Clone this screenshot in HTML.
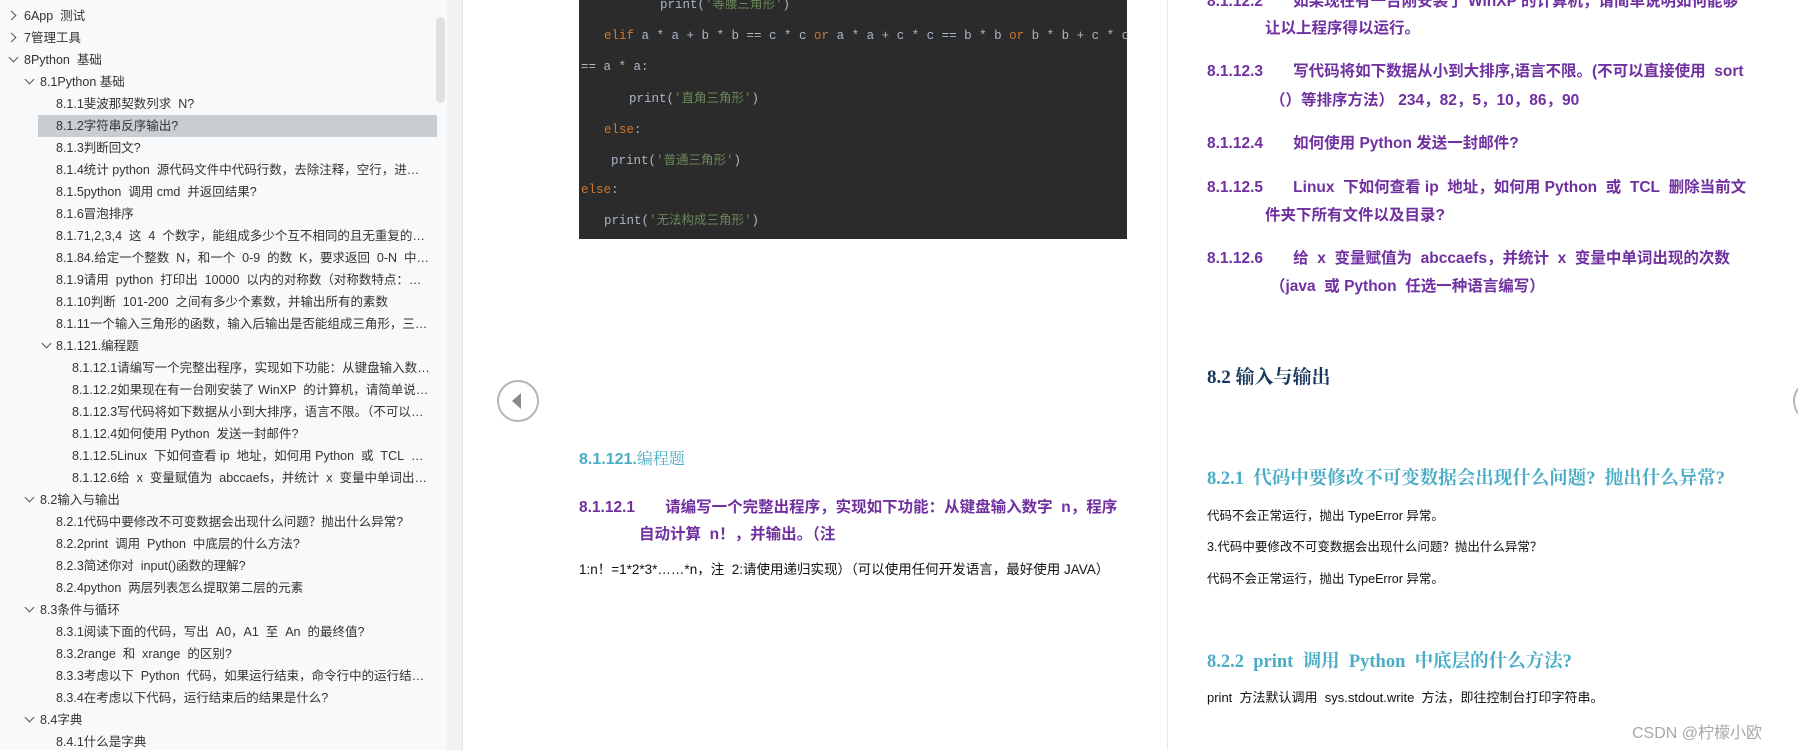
<!DOCTYPE html>
<html><head><meta charset="utf-8"><style>
*{margin:0;padding:0;box-sizing:border-box}
body{width:1798px;height:750px;overflow:hidden;background:#fff;position:relative;font-family:"Liberation Sans","Noto Sans CJK SC",sans-serif}
.a{position:absolute;white-space:nowrap}
#side{position:absolute;left:0;top:0;width:447px;height:750px;background:#f8f9fa}
#gap{position:absolute;left:447px;top:0;width:16px;height:750px;background:#f1f2f4;border-right:1px solid #e3e4e6}
.r{position:absolute;height:22px;line-height:22px;font-size:12.5px;color:#333;white-space:nowrap;overflow:hidden;text-overflow:ellipsis;max-width:calc(430px - var(--l,56px))}
.chev{position:absolute;width:7px;height:7px;border-right:1.3px solid #555;border-bottom:1.3px solid #555}
.code{position:absolute;left:579px;top:0;width:548px;height:239px;background:#2b2b2b;font-family:"Liberation Mono","Noto Sans CJK SC",monospace;font-size:12.5px;color:#a9b7c6}
.code div{position:absolute;height:16px;line-height:16px;white-space:pre}
.k{color:#cc7832}.s{color:#6a8759}
.p{color:#7030a0;font-weight:bold;font-size:15.5px;line-height:22px}
.t{color:#4bacc6;font-weight:bold;font-family:"Liberation Serif","Noto Serif CJK SC",serif;font-size:18.5px}
.b{color:#111;font-size:12.5px;line-height:18px}
</style></head><body>
<div id="side"></div><div id="gap"></div>
<div class="a" style="left:436px;top:17px;width:9px;height:86px;background:#dfe0e2;border-radius:5px"></div>
<div class="a" style="left:38px;top:115px;width:399px;height:22px;background:#c9ced3"></div>

<div class="chev" style="left:8px;top:12px;transform:rotate(-45deg)"></div><div class="r" style="left:24px;top:5px">6App&nbsp; 测试</div>
<div class="chev" style="left:8px;top:34px;transform:rotate(-45deg)"></div><div class="r" style="left:24px;top:27px">7管理工具</div>
<div class="chev" style="left:10px;top:54px;transform:rotate(45deg)"></div><div class="r" style="left:24px;top:49px">8Python&nbsp; 基础</div>
<div class="chev" style="left:26px;top:76px;transform:rotate(45deg)"></div><div class="r" style="left:40px;top:71px">8.1Python 基础</div>
<div class="r" style="left:56px;top:93px">8.1.1斐波那契数列求&nbsp; N?</div>
<div class="r" style="left:56px;top:115px">8.1.2字符串反序输出?</div>
<div class="r" style="left:56px;top:137px">8.1.3判断回文?</div>
<div class="r" style="left:56px;top:159px">8.1.4统计 python&nbsp; 源代码文件中代码行数，去除注释，空行，进行输出</div>
<div class="r" style="left:56px;top:181px">8.1.5python&nbsp; 调用 cmd&nbsp; 并返回结果?</div>
<div class="r" style="left:56px;top:203px">8.1.6冒泡排序</div>
<div class="r" style="left:56px;top:225px">8.1.71,2,3,4&nbsp; 这&nbsp; 4&nbsp; 个数字，能组成多少个互不相同的且无重复的三位数</div>
<div class="r" style="left:56px;top:247px">8.1.84.给定一个整数&nbsp; N，和一个&nbsp; 0-9&nbsp; 的数&nbsp; K，要求返回&nbsp; 0-N&nbsp; 中数字</div>
<div class="r" style="left:56px;top:269px">8.1.9请用&nbsp; python&nbsp; 打印出&nbsp; 10000&nbsp; 以内的对称数（对称数特点：数字</div>
<div class="r" style="left:56px;top:291px">8.1.10判断&nbsp; 101-200&nbsp; 之间有多少个素数，并输出所有的素数</div>
<div class="r" style="left:56px;top:313px">8.1.11一个输入三角形的函数，输入后输出是否能组成三角形，三角形类型</div>
<div class="chev" style="left:43px;top:340px;transform:rotate(45deg)"></div><div class="r" style="left:56px;top:335px">8.1.121.编程题</div>
<div class="r" style="--l:72px;left:72px;top:357px">8.1.12.1请编写一个完整出程序，实现如下功能：从键盘输入数字数字</div>
<div class="r" style="--l:72px;left:72px;top:379px">8.1.12.2如果现在有一台刚安装了 WinXP&nbsp; 的计算机，请简单说明如何</div>
<div class="r" style="--l:72px;left:72px;top:401px">8.1.12.3写代码将如下数据从小到大排序，语言不限。（不可以直接使用</div>
<div class="r" style="--l:72px;left:72px;top:423px">8.1.12.4如何使用 Python&nbsp; 发送一封邮件?</div>
<div class="r" style="--l:72px;left:72px;top:445px">8.1.12.5Linux&nbsp; 下如何查看 ip&nbsp; 地址，如何用 Python&nbsp; 或&nbsp; TCL&nbsp; 删除当前</div>
<div class="r" style="--l:72px;left:72px;top:467px">8.1.12.6给&nbsp; x&nbsp; 变量赋值为&nbsp; abccaefs，并统计&nbsp; x&nbsp; 变量中单词出现的次数</div>
<div class="chev" style="left:26px;top:494px;transform:rotate(45deg)"></div><div class="r" style="left:40px;top:489px">8.2输入与输出</div>
<div class="r" style="left:56px;top:511px">8.2.1代码中要修改不可变数据会出现什么问题？抛出什么异常?</div>
<div class="r" style="left:56px;top:533px">8.2.2print&nbsp; 调用&nbsp; Python&nbsp; 中底层的什么方法?</div>
<div class="r" style="left:56px;top:555px">8.2.3简述你对&nbsp; input()函数的理解?</div>
<div class="r" style="left:56px;top:577px">8.2.4python&nbsp; 两层列表怎么提取第二层的元素</div>
<div class="chev" style="left:26px;top:604px;transform:rotate(45deg)"></div><div class="r" style="left:40px;top:599px">8.3条件与循环</div>
<div class="r" style="left:56px;top:621px">8.3.1阅读下面的代码，写出&nbsp; A0，A1&nbsp; 至&nbsp; An&nbsp; 的最终值?</div>
<div class="r" style="left:56px;top:643px">8.3.2range&nbsp; 和&nbsp; xrange&nbsp; 的区别?</div>
<div class="r" style="left:56px;top:665px">8.3.3考虑以下&nbsp; Python&nbsp; 代码，如果运行结束，命令行中的运行结果是什么</div>
<div class="r" style="left:56px;top:687px">8.3.4在考虑以下代码，运行结束后的结果是什么?</div>
<div class="chev" style="left:26px;top:714px;transform:rotate(45deg)"></div><div class="r" style="left:40px;top:709px">8.4字典</div>
<div class="r" style="left:56px;top:731px">8.4.1什么是字典</div>

<div class="a" style="left:1167px;top:0;width:1px;height:750px;background:#e8e8e8"></div>

<div class="code">
<div style="left:81px;top:-3px">print(<span class="s">'等腰三角形'</span>)</div>
<div style="left:25px;top:28px"><span class="k">elif</span> a * a + b * b == c * c <span class="k">or</span> a * a + c * c == b * b <span class="k">or</span> b * b + c * c</div>
<div style="left:2px;top:59px">== a * a:</div>
<div style="left:50px;top:91px">print(<span class="s">'直角三角形'</span>)</div>
<div style="left:25px;top:122px"><span class="k">else</span>:</div>
<div style="left:32px;top:153px">print(<span class="s">'普通三角形'</span>)</div>
<div style="left:2px;top:182px"><span class="k">else</span>:</div>
<div style="left:25px;top:213px">print(<span class="s">'无法构成三角形'</span>)</div>
</div>

<div class="a" style="left:497px;top:380px;width:42px;height:42px;border:2px solid #b5b5b5;border-radius:50%"></div>
<div class="a" style="left:512px;top:393px;width:0;height:0;border-top:8px solid transparent;border-bottom:8px solid transparent;border-right:9px solid #8a8a8a"></div>
<div class="a" style="left:1793px;top:380px;width:42px;height:42px;border:2px solid #b5b5b5;border-radius:50%"></div>

<div class="a" style="left:579px;top:446px;color:#4bacc6;font-size:16px;font-weight:bold;font-family:'Liberation Sans','Noto Serif CJK SC',serif">8.1.121.<span style="font-weight:normal">编程题</span></div>
<div class="a p" style="left:579px;top:497px">8.1.12.1&nbsp;&nbsp;&nbsp;&nbsp;&nbsp;&nbsp;&nbsp;请编写一个完整出程序，实现如下功能：从键盘输入数字&nbsp; n，程序</div>
<div class="a p" style="left:639px;top:524px">自动计算&nbsp; n！，并输出。（注</div>
<div class="a b" style="left:579px;top:561px;font-size:13.5px">1:n！=1*2*3*……*n，注&nbsp; 2:请使用递归实现）（可以使用任何开发语言，最好使用 JAVA）</div>

<div class="a p" style="left:1207px;top:-9px">8.1.12.2&nbsp;&nbsp;&nbsp;&nbsp;&nbsp;&nbsp;&nbsp;如果现在有一台刚安装了 WinXP 的计算机，请简单说明如何能够</div>
<div class="a p" style="left:1265px;top:18px">让以上程序得以运行。</div>
<div class="a p" style="left:1207px;top:61px">8.1.12.3&nbsp;&nbsp;&nbsp;&nbsp;&nbsp;&nbsp;&nbsp;写代码将如下数据从小到大排序,语言不限。(不可以直接使用&nbsp; sort</div>
<div class="a p" style="left:1270px;top:90px">（）等排序方法） 234，82，5，10，86，90</div>
<div class="a p" style="left:1207px;top:133px">8.1.12.4&nbsp;&nbsp;&nbsp;&nbsp;&nbsp;&nbsp;&nbsp;如何使用 Python 发送一封邮件?</div>
<div class="a p" style="left:1207px;top:177px">8.1.12.5&nbsp;&nbsp;&nbsp;&nbsp;&nbsp;&nbsp;&nbsp;Linux&nbsp; 下如何查看 ip&nbsp; 地址，如何用 Python&nbsp; 或&nbsp; TCL&nbsp; 删除当前文</div>
<div class="a p" style="left:1265px;top:205px">件夹下所有文件以及目录?</div>
<div class="a p" style="left:1207px;top:248px">8.1.12.6&nbsp;&nbsp;&nbsp;&nbsp;&nbsp;&nbsp;&nbsp;给&nbsp; x&nbsp; 变量赋值为&nbsp; abccaefs，并统计&nbsp; x&nbsp; 变量中单词出现的次数</div>
<div class="a p" style="left:1270px;top:276px">（java&nbsp; 或 Python&nbsp; 任选一种语言编写）</div>

<div class="a" style="left:1207px;top:362px;font-size:19px;color:#17365d;font-family:'Liberation Serif','Noto Serif CJK SC',serif;font-weight:bold">8.2 输入与输出</div>
<div class="a t" style="left:1207px;top:464px">8.2.1&nbsp; 代码中要修改不可变数据会出现什么问题?&nbsp; 抛出什么异常?</div>
<div class="a b" style="left:1207px;top:507px">代码不会正常运行，抛出 TypeError 异常。</div>
<div class="a b" style="left:1207px;top:538px">3.代码中要修改不可变数据会出现什么问题？抛出什么异常？</div>
<div class="a b" style="left:1207px;top:570px">代码不会正常运行，抛出 TypeError 异常。</div>
<div class="a t" style="left:1207px;top:647px">8.2.2&nbsp; print&nbsp; 调用&nbsp; Python&nbsp; 中底层的什么方法?</div>
<div class="a b" style="left:1207px;top:689px;font-size:13px">print&nbsp; 方法默认调用&nbsp; sys.stdout.write&nbsp; 方法，即往控制台打印字符串。</div>
<div class="a" style="left:1632px;top:719px;font-size:16px;color:#a8a8a8">CSDN @柠檬小欧</div>
</body></html>
